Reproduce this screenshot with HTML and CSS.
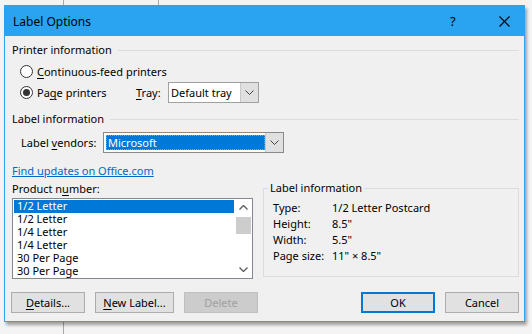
FILE: index.html
```html
<!DOCTYPE html>
<html lang="en">
<head>
  <meta charset="UTF-8">
  <title>Label Options</title>
  <link rel="stylesheet" href="styles.css">
</head>
<body>
  <div class="dialog">
    <div class="titlebar">
      <span class="title">Label Options</span>
      <span class="help">?</span>
      <svg class="close" viewBox="0 0 11 11" width="11" height="11">
        <path d="M0.5 0.5 L10.5 10.5 M10.5 0.5 L0.5 10.5" stroke="#000" stroke-width="1.1" fill="none"/>
      </svg>
    </div>
    <div class="content">
      <div class="group-title">Printer information</div>
      <div class="radio-row first">
        <span class="radio"></span>
        <span><u>C</u>ontinuous-feed printers</span>
      </div>
      <div class="radio-row">
        <span class="radio checked"></span>
        <span class="page-label">Pa<u>g</u>e printers</span>
        <span class="tray-label"><u>T</u>ray:</span>
        <div class="combo tray">
          <span class="combo-value">Default tray</span>
          <span class="combo-btn">
            <svg viewBox="0 0 9 5" width="9" height="5"><path d="M0.5 0.5 L4.5 4.5 L8.5 0.5" stroke="#444" fill="none"/></svg>
          </span>
        </div>
      </div>
      <div class="group-title second">Label information</div>
      <div class="vendor-row">
        <span class="vendor-label">Label <u>v</u>endors:</span>
        <div class="combo vendor">
          <span class="combo-value selected">Microsoft</span>
          <span class="combo-btn">
            <svg viewBox="0 0 9 5" width="9" height="5"><path d="M0.5 0.5 L4.5 4.5 L8.5 0.5" stroke="#444" fill="none"/></svg>
          </span>
        </div>
      </div>
      <a class="link" href="#">Find updates on Office.com</a>
      <div class="product">
        <div class="product-left">
          <div class="product-label">Product n<u>u</u>mber:</div>
          <div class="listbox">
            <div class="items">
              <div class="item active">1/2 Letter</div>
              <div class="item">1/2 Letter</div>
              <div class="item">1/4 Letter</div>
              <div class="item">1/4 Letter</div>
              <div class="item">30 Per Page</div>
              <div class="item">30 Per Page</div>
            </div>
            <div class="scrollbar">
              <svg class="arrow" viewBox="0 0 9 5" width="9" height="5"><path d="M0.5 4.5 L4.5 0.5 L8.5 4.5" stroke="#606060" stroke-width="1.4" fill="none"/></svg>
              <div class="thumb"></div>
              <div class="track"></div>
              <svg class="arrow" viewBox="0 0 9 5" width="9" height="5"><path d="M0.5 0.5 L4.5 4.5 L8.5 0.5" stroke="#606060" stroke-width="1.4" fill="none"/></svg>
            </div>
          </div>
        </div>
        <div class="info">
          <span class="info-legend">Label information</span>
          <div class="info-row"><span class="info-key">Type:</span><span>1/2 Letter Postcard</span></div>
          <div class="info-row"><span class="info-key">Height:</span><span>8.5"</span></div>
          <div class="info-row"><span class="info-key">Width:</span><span>5.5"</span></div>
          <div class="info-row"><span class="info-key">Page size:</span><span>11" × 8.5"</span></div>
        </div>
      </div>
      <div class="buttons">
        <button class="btn"><u>D</u>etails...</button>
        <button class="btn wide"><u>N</u>ew Label...</button>
        <button class="btn disabled">Delete</button>
        <span class="spacer"></span>
        <button class="btn default">OK</button>
        <button class="btn">Cancel</button>
      </div>
    </div>
  </div>
</body>
</html>
```

FILE: styles.css
```css
html, body {margin: 0; padding: 0; height: 100%; overflow: hidden;}
body {
  background:
    linear-gradient(90deg, transparent 158px, #a8a8a8 158px, #a8a8a8 159px, transparent 159px) 0 0 / 100% 5px no-repeat,
    linear-gradient(90deg, transparent 63px, #a8a8a8 63px, #a8a8a8 64px, transparent 64px),
    #f4f4f4;
  font-family: "Noto Sans", "Open Sans", Arial, sans-serif;
  font-size: 11px;
  color: #000;
  padding: 5px 0 0 4px;
  box-sizing: border-box;
  white-space: nowrap;
}
u {text-decoration: underline; text-underline-offset: 2px;}

.dialog {
  width: 521px; height: 317px; box-sizing: border-box;
  background: #f0f0f0; border: 1px solid #2aa3f0;
  box-shadow: 2px 3px 3px rgba(0,0,0,0.35);
  display: flex; flex-direction: column;
}
.titlebar {
  height: 30px; flex: none; background: #2aa3f0;
  display: flex; align-items: center; padding: 0 0 0 8px;
}
.title {flex: 1; font-size: 12px; padding-top: 1px;}
.help {font-size: 13px; width: 12px; margin-right: 37px;}
.close {margin-right: 14px;}

.content {padding: 6px 5px 0 7px; flex: 1; display: flex; flex-direction: column;}
.group-title {height: 16px; line-height: 16px; display: flex; align-items: center;}
.group-title::after {content: ""; flex: 1; border-top: 1px solid #dcdcdc; margin-left: 6px;}
.group-title.second {margin-top: 8px;}

.radio-row {height: 21px; display: flex; align-items: center;}
.radio-row.first {margin-top: 3px;}
.radio {
  width: 13px; height: 13px; box-sizing: border-box; border-radius: 50%;
  border: 1px solid #333; background: #fff; margin: 0 4px 0 8px;
  display: flex; align-items: center; justify-content: center;
}
.radio.checked::after {content: ""; width: 7px; height: 7px; border-radius: 50%; background: #333;}
.page-label {width: 99px;}
.tray-label {width: 32px;}

.combo {
  height: 21px; box-sizing: border-box; border: 1px solid #a0a0a0; background: #fff;
  display: flex; align-items: stretch;
}
.combo.tray {width: 91px;}
.combo.vendor {width: 181px; border-color: #8a8a8a;}
.combo-value {flex: 1; display: flex; align-items: center; padding-left: 2px; margin: 2px 0 2px 2px;}
.combo.tray .combo-value {margin-left: 0;}
.combo-value.selected {background: #0078d7; color: #fff; outline: 1px dotted #d4914b; outline-offset: -1px;}
.combo-btn {width: 17px; background: #e0e0e0; display: flex; align-items: center; justify-content: center; border-left: 1px solid #c8c8c8;}

.vendor-row {height: 21px; margin-top: 5px; display: flex; align-items: center;}
.vendor-label {width: 82px; margin-left: 9px;}

.link {color: #0066cc; margin-top: 10px; line-height: 16px; align-self: flex-start;}

.product {display: flex; gap: 10px; margin-top: 2px;}
.product-left {width: 241px;}
.product-label {line-height: 16px;}
.listbox {
  margin-top: 1px; height: 81px; box-sizing: border-box; border: 1px solid #828790;
  background: #fff; display: flex;
}
.items {flex: 1; padding: 1px 1px 0 1px;}
.item {height: 13px; line-height: 12px; padding-left: 3px;}
.item.active {background: #0078d7; color: #fff;}
.scrollbar {width: 17px; display: flex; flex-direction: column; align-items: center; padding: 4px 0 4px;}
.arrow {flex: none; margin: 2px 0;}
.thumb {width: 15px; height: 17px; background: #cdcdcd; margin-top: 5px;}
.track {flex: 1;}

.info {
  position: relative; width: 256px; height: 89px; box-sizing: border-box;
  margin-top: 7px; border: 1px solid #dcdcdc; padding: 11px 0 0 9px;
}
.info-legend {position: absolute; top: -9px; left: 4px; padding: 0 2px; background: #f0f0f0; line-height: 16px;}
.info-row {line-height: 16px; display: flex;}
.info-key {width: 59px;}

.buttons {display: flex; gap: 10px; margin-top: 13px; margin-left: -1px;}
.spacer {flex: 1;}
.btn {
  width: 74px; height: 21px; box-sizing: border-box; padding: 0;
  background: #e1e1e1; border: 1px solid #adadad; color: #000;
  font-family: inherit; font-size: 11px;
}
.btn.wide {width: 79px;}
.btn.disabled {background: #cccccc; border-color: #bfbfbf; color: #a0a0a0;}
.btn.default {border: 2px solid #0078d7;}
```
